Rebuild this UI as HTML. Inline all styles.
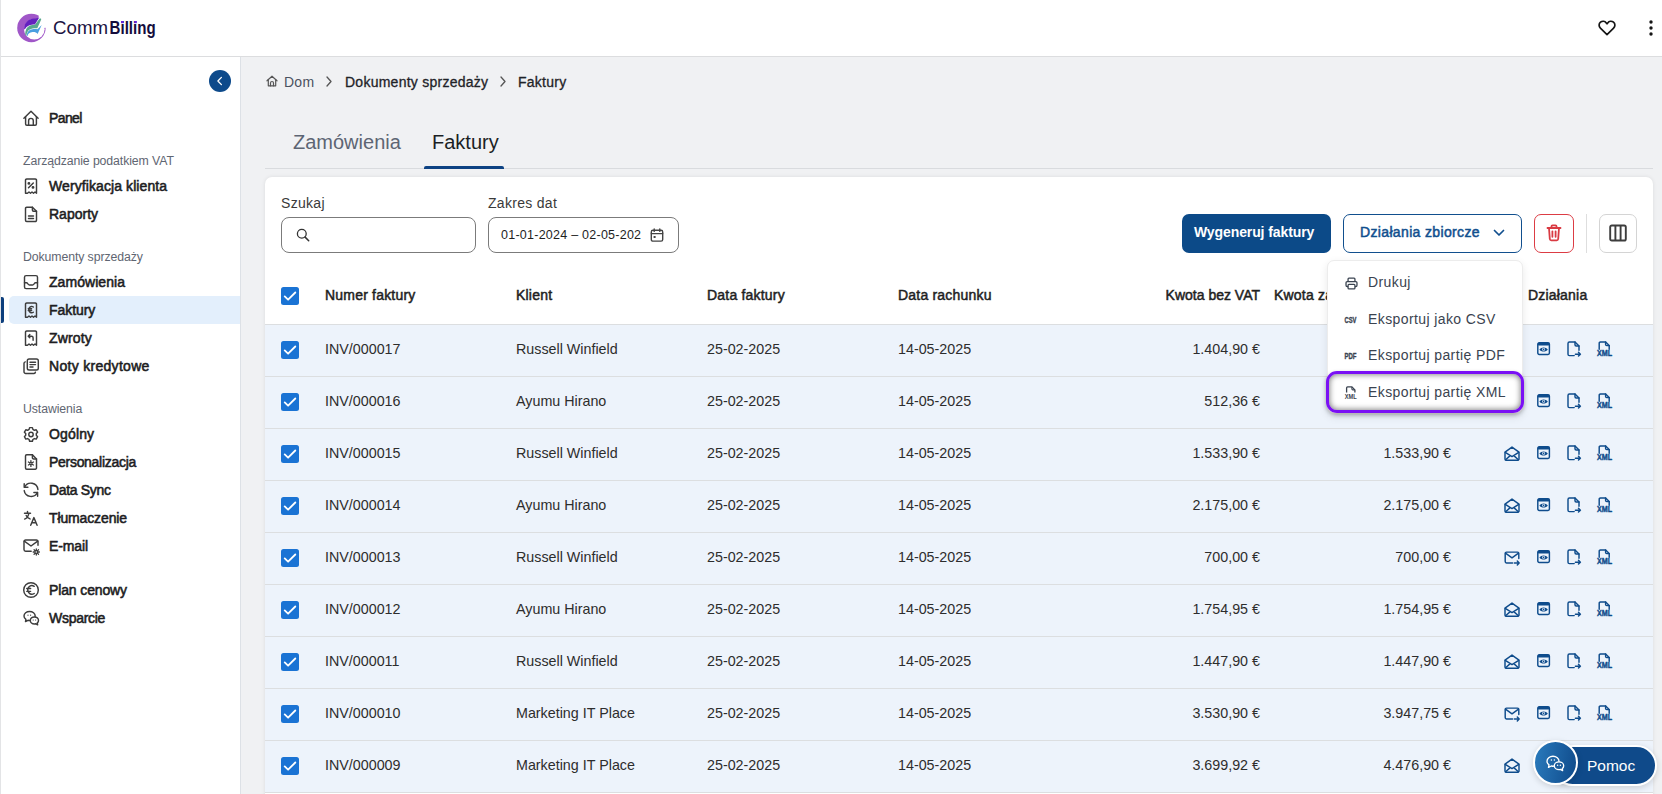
<!DOCTYPE html><html><head><meta charset="utf-8"><title>CommBilling</title><style>
*{box-sizing:border-box;margin:0;padding:0}
html,body{width:1662px;height:794px;overflow:hidden}
body{position:relative;background:#f0f1f3;font-family:"Liberation Sans",sans-serif;color:#1f2328}
.t{position:absolute;white-space:nowrap}
svg{position:absolute;overflow:visible}
#hdr{position:absolute;left:0;top:0;width:1662px;height:57px;background:#fff;border-bottom:1px solid #dcdddf}
#lline{position:absolute;left:0;top:0;width:1px;height:794px;background:#e3e4e6;z-index:50}
#side{position:absolute;left:0;top:57px;width:241px;height:737px;background:#fff;border-right:1px solid #dde1e6}
.nav{position:absolute;left:49px;font-size:14px;color:#1d1d22;-webkit-text-stroke:.55px #1d1d22;white-space:nowrap;letter-spacing:0px}
.grp{position:absolute;left:23px;font-size:12.3px;color:#5f6672;white-space:nowrap;letter-spacing:-0.1px}
.ic{stroke:#3d3d3d;fill:none;stroke-width:1.45;stroke-linecap:round;stroke-linejoin:round}
#card{position:absolute;left:265px;top:177px;width:1388px;height:640px;background:#fff;border-radius:7px;box-shadow:0 0 4px rgba(0,0,0,.09)}
.row{position:absolute;left:265px;width:1388px;height:52px;background:#edf3fb;border-bottom:1px solid #dcdee0}
.cb{position:absolute;left:281px;width:18px;height:18px;background:#1a73d4;border-radius:2.5px}
.cb svg{left:0;top:0}
.cell{position:absolute;font-size:14.3px;color:#2d2d2d;white-space:nowrap}
.hd{position:absolute;font-size:14px;color:#1f1f1f;-webkit-text-stroke:.5px #1f1f1f;white-space:nowrap;letter-spacing:.2px}
.ri{stroke:#0f4c8c;fill:none;stroke-width:1.45;stroke-linecap:round;stroke-linejoin:round}
</style></head><body>
<div id="lline"></div>
<div id="hdr">
<svg style="left:15px;top:12px" width="32" height="32" viewBox="0 0 32 32">
<circle cx="16.4" cy="16" r="14.2" fill="#a057c8"/>
<circle cx="19.3" cy="17.3" r="10.3" fill="#fff"/>
<path d="M19.3 17.3 L25.6 -1 L40 -1 L40 14.6 Z" fill="#fff"/>
<path d="M9.1 17 C9.3 10.5 13.5 7.2 19 6.6 C21 6.4 22.9 6.1 24.4 5.3 L19.9 12.4 C15.5 12.5 11.8 13.4 9.8 17.5 Z" fill="#6421bf"/>
<path d="M10.3 23.2 C10 17.5 12.4 13.6 17.5 13.1 L19.9 12.8 L24.5 6.8 C25.3 6 26.6 6.6 26.1 7.8 L22.3 16.3 C21 16.1 19.5 16.2 17.5 16.4 C14 16.8 12 19.2 11.3 23.6 Z" fill="#5aa98e"/>
<path d="M11.9 24 C11.8 19.8 14 17.5 17.5 17.2 C19.5 17 21.2 17.1 22.5 17.3 L26.7 12.9 L22.6 22 C21.6 20.2 19.7 19.8 17.6 19.9 C14.6 20.2 12.9 21.7 12.4 24.2 Z" fill="#4a9fe0"/>
</svg>
<svg style="left:50px;top:14px" width="110" height="28" viewBox="0 0 110 28"><text x="3" y="19.6" font-family="Liberation Sans" font-size="17.5" fill="#1b1443" textLength="55" lengthAdjust="spacingAndGlyphs">Comm</text><text x="59.6" y="19.6" font-family="Liberation Sans" font-weight="bold" font-size="17.5" fill="#140c3c" textLength="46" lengthAdjust="spacingAndGlyphs">Billing</text><rect x="71" y="7" width="2.6" height="2.2" fill="#6a22d8"/><rect x="84.2" y="7" width="2.6" height="2.2" fill="#6a22d8"/></svg>
<svg style="left:1598px;top:20px" width="18" height="16" viewBox="0 0 18 16"><path d="M9 14.6 L2.4 8.2 C0.6 6.4 0.7 3.6 2.5 2.2 C4.3 0.8 6.9 1.1 8.3 2.9 L9 3.8 L9.7 2.9 C11.1 1.1 13.7 0.8 15.5 2.2 C17.3 3.6 17.4 6.4 15.6 8.2 Z" fill="none" stroke="#151515" stroke-width="1.7" stroke-linejoin="round"/></svg>
<svg style="left:1648px;top:19px" width="6" height="18" viewBox="0 0 6 18"><circle cx="3" cy="3" r="1.7" fill="#151515"/><circle cx="3" cy="9" r="1.7" fill="#151515"/><circle cx="3" cy="15" r="1.7" fill="#151515"/></svg>
</div>
<div id="side"></div>
<svg style="left:209px;top:70px" width="22" height="22" viewBox="0 0 22 22"><circle cx="11" cy="11" r="11" fill="#0d4a8b"/><path d="M12.4 7.4 L8.9 11 L12.4 14.6" fill="none" stroke="#fff" stroke-width="1.3" stroke-linecap="round" stroke-linejoin="round"/></svg>
<div style="position:absolute;left:9px;top:296px;width:231px;height:28px;background:#e3effc;border-radius:5px 0 0 5px"></div>
<div style="position:absolute;left:1px;top:297px;width:3px;height:26px;background:#0d3f7d;border-radius:0 2px 2px 0"></div>
<svg class="ic" style="left:23px;top:110px" width="16" height="16" viewBox="0 0 16 16"><path d="M0.9 8.2 L8 1.2 L15.1 8.2"/><path d="M2.6 6.6 V14 A1.2 1.2 0 0 0 3.8 15.2 H12.2 A1.2 1.2 0 0 0 13.4 14 V6.6"/><path d="M5.6 15.2 V10.7 A2.35 2.35 0 0 1 10.3 10.7 V15.2"/></svg>
<div class="nav" style="top:110px;line-height:16px;letter-spacing:-0.6px">Panel</div>
<svg class="ic" style="left:23px;top:178px" width="16" height="16" viewBox="0 0 16 16"><path d="M2.5 15.2 V2.2 A1.2 1.2 0 0 1 3.7 1 H12.3 A1.2 1.2 0 0 1 13.5 2.2 V15.2 L12 14 L10.5 15.2 L9 14 L7.5 15.2 L6 14 L4.5 15.2 Z" stroke-width="1.45"/><path d="M5.5 9.8 L10.3 5"/><circle cx="5.9" cy="5.4" r=".7" fill="#3d3d3d"/><circle cx="10" cy="9.4" r=".7" fill="#3d3d3d"/></svg>
<div class="nav" style="top:178px;line-height:16px;letter-spacing:0.09px">Weryfikacja klienta</div>
<svg class="ic" style="left:23px;top:206px" width="16" height="16" viewBox="0 0 16 16"><path d="M9.4 1.2 H3.7 A1.2 1.2 0 0 0 2.5 2.4 V14.3 A1.2 1.2 0 0 0 3.7 15.5 H12.3 A1.2 1.2 0 0 0 13.5 14.3 V5.3 Z"/><path d="M9.4 1.2 V4.1 A1.2 1.2 0 0 0 10.6 5.3 H13.5"/><path d="M5.5 10 H10.5 M5.5 12.5 H10.5"/></svg>
<div class="nav" style="top:206px;line-height:16px;letter-spacing:0px">Raporty</div>
<svg class="ic" style="left:23px;top:274px" width="16" height="16" viewBox="0 0 16 16"><rect x="1.5" y="1.6" width="13" height="13" rx="1.6"/><path d="M1.5 8.8 H3.6 C4.6 8.8 5.2 11 6.4 11 H9.6 C10.8 11 11.4 8.8 12.4 8.8 H14.5"/></svg>
<div class="nav" style="top:274px;line-height:16px;letter-spacing:0.05px">Zamówienia</div>
<svg class="ic" style="left:23px;top:302px" width="16" height="16" viewBox="0 0 16 16"><path d="M2.5 15.2 V2.2 A1.2 1.2 0 0 1 3.7 1 H12.3 A1.2 1.2 0 0 1 13.5 2.2 V15.2 L12 14 L10.5 15.2 L9 14 L7.5 15.2 L6 14 L4.5 15.2 Z"/><path d="M10.3 5 A2.8 3.2 0 1 0 10.3 10.2 M5.3 6.8 H8.6 M5.3 8.4 H8.6"/></svg>
<div class="nav" style="top:302px;line-height:16px;letter-spacing:-0.07px">Faktury</div>
<svg class="ic" style="left:23px;top:330px" width="16" height="16" viewBox="0 0 16 16"><path d="M2.5 15.2 V2.2 A1.2 1.2 0 0 1 3.7 1 H12.3 A1.2 1.2 0 0 1 13.5 2.2 V15.2 L12 14 L10.5 15.2 L9 14 L7.5 15.2 L6 14 L4.5 15.2 Z"/><path d="M6.8 4.6 L5.2 6.2 L6.8 7.8 M5.2 6.2 H8.5 A1.6 1.6 0 0 1 10.1 7.8 V10.2"/></svg>
<div class="nav" style="top:330px;line-height:16px;letter-spacing:0.16px">Zwroty</div>
<svg class="ic" style="left:23px;top:358px" width="16" height="16" viewBox="0 0 16 16"><rect x="4.3" y="1" width="11" height="11" rx="1.8"/><path d="M2.3 3.9 A1.5 1.5 0 0 0 1 5.4 V13.7 A1.8 1.8 0 0 0 2.8 15.5 H11 A1.5 1.5 0 0 0 12.4 14.2"/><path d="M7 4.3 H12.5 M7 6.6 H12.5 M7 8.9 H10"/></svg>
<div class="nav" style="top:358px;line-height:16px;letter-spacing:0.3px">Noty kredytowe</div>
<svg class="ic" style="left:23px;top:426px" width="16" height="16" viewBox="0 0 16 16"><path d="M6.6 1.6 H9.4 L9.9 3.4 L11.4 4.3 L13.2 3.8 L14.6 6.2 L13.3 7.6 V9.3 L14.6 10.7 L13.2 13.1 L11.4 12.6 L9.9 13.5 L9.4 15.3 H6.6 L6.1 13.5 L4.6 12.6 L2.8 13.1 L1.4 10.7 L2.7 9.3 V7.6 L1.4 6.2 L2.8 3.8 L4.6 4.3 L6.1 3.4 Z"/><circle cx="8" cy="8.45" r="2.2"/></svg>
<div class="nav" style="top:426px;line-height:16px;letter-spacing:0.14px">Ogólny</div>
<svg class="ic" style="left:23px;top:454px" width="16" height="16" viewBox="0 0 16 16"><path d="M9.4 0.8 H3.7 A1.2 1.2 0 0 0 2.5 2 V14 A1.2 1.2 0 0 0 3.7 15.2 H12.3 A1.2 1.2 0 0 0 13.5 14 V4.9 Z"/><path d="M9.4 0.8 V3.7 A1.2 1.2 0 0 0 10.6 4.9 H13.5"/><path d="M7.9 6.6 V12.4 M5.4 8.05 L10.4 10.95 M5.4 10.95 L10.4 8.05" stroke-width="1.3"/><circle cx="7.9" cy="9.5" r="1.5" fill="#3d3d3d" stroke="none"/><circle cx="7.9" cy="9.5" r=".55" fill="#fff" stroke="none"/></svg>
<div class="nav" style="top:454px;line-height:16px;letter-spacing:-0.29px">Personalizacja</div>
<svg class="ic" style="left:23px;top:482px" width="16" height="16" viewBox="0 0 16 16"><path d="M14.9 7.5 A7 7 0 0 0 1.6 5.2"/><path d="M1.2 1.8 V5.3 H4.9"/><path d="M1.2 8.6 A7 7 0 0 0 14.4 10.5"/><path d="M10.9 10.4 H14.6 V14.2"/></svg>
<div class="nav" style="top:482px;line-height:16px;letter-spacing:-0.33px">Data Sync</div>
<svg class="ic" style="left:23px;top:510px" width="16" height="16" viewBox="0 0 16 16"><path d="M1.5 3.2 H7.5 M4.5 1.5 V3.2 M5.8 3.2 C5.5 6.3 3.8 8.2 1.6 9.1 M3.2 5.5 C3.8 7 5.3 8.3 7 8.9"/><path d="M7.7 15.3 L10.9 7.6 L14.1 15.3 M8.8 12.8 H13"/></svg>
<div class="nav" style="top:510px;line-height:16px;letter-spacing:-0.13px">Tłumaczenie</div>
<svg class="ic" style="left:23px;top:538px" width="16" height="16" viewBox="0 0 16 16"><path d="M15 7.3 V3.6 A1.6 1.6 0 0 0 13.4 2 H2.6 A1.6 1.6 0 0 0 1 3.6 V11.6 A1.6 1.6 0 0 0 2.6 13.2 H8.2"/><path d="M1.3 3.2 L8 8 L14.7 3.2"/><circle cx="13.3" cy="14" r="1.5" stroke-width="1.4"/><path d="M13.3 10.9 V11.7 M13.3 16.3 V17.1 M10.2 14 H11 M15.6 14 H16.4 M11.1 11.8 L11.7 12.4 M14.9 15.6 L15.5 16.2 M15.5 11.8 L14.9 12.4 M11.7 15.6 L11.1 16.2" stroke-width="1.3"/></svg>
<div class="nav" style="top:538px;line-height:16px;letter-spacing:-0.12px">E-mail</div>
<svg class="ic" style="left:23px;top:582px" width="16" height="16" viewBox="0 0 16 16"><circle cx="8" cy="8" r="7.3"/><path d="M11.2 4.3 A4.1 4.3 0 1 0 11.2 11.5"/><path d="M3.7 6.5 H7.7 M3.7 9.3 H7.7" stroke-width="1.3"/></svg>
<div class="nav" style="top:582px;line-height:16px;letter-spacing:-0.13px">Plan cenowy</div>
<svg class="ic" style="left:23px;top:610px" width="16" height="16" viewBox="0 0 16 16"><path d="M6.6 1.4 C3.5 1.4 1 3.4 1 5.9 C1 7.3 1.7 8.5 2.9 9.3 L2.5 11.6 L5 10.3 C5.5 10.4 6 10.5 6.6 10.5 C9.7 10.5 12.2 8.5 12.2 5.9 C12.2 3.4 9.7 1.4 6.6 1.4 Z"/><path d="M11.4 6.9 C9.1 6.9 7.3 8.4 7.3 10.4 C7.3 12.4 9.1 13.9 11.4 13.9 C11.8 13.9 12.2 13.8 12.6 13.7 L14.6 14.8 L14.3 12.9 C15.1 12.3 15.5 11.4 15.5 10.4 C15.5 8.4 13.7 6.9 11.4 6.9 Z" fill="#fff"/><circle cx="5" cy="5.2" r=".6" fill="#3d3d3d" stroke="none"/><circle cx="7.6" cy="5.2" r=".6" fill="#3d3d3d" stroke="none"/><circle cx="10.2" cy="10" r=".6" fill="#3d3d3d" stroke="none"/><circle cx="12.6" cy="10" r=".6" fill="#3d3d3d" stroke="none"/></svg>
<div class="nav" style="top:610px;line-height:16px;letter-spacing:-0.28px">Wsparcie</div>
<div class="grp" style="top:154px;line-height:14px">Zarządzanie podatkiem VAT</div>
<div class="grp" style="top:250px;line-height:14px">Dokumenty sprzedaży</div>
<div class="grp" style="top:402px;line-height:14px">Ustawienia</div>
<svg class="ic" style="left:266px;top:75px;stroke:#555;stroke-width:1.2" width="12" height="12" viewBox="0 0 12 12"><path d="M1 5.8 L6 1.2 L11 5.8"/><path d="M2.3 4.7 V10.8 H9.7 V4.7"/><path d="M4.5 10.8 V8 A1.5 1.5 0 0 1 7.5 8 V10.8"/></svg>
<div class="t" style="left:284px;top:74px;font-size:14px;letter-spacing:.25px;color:#4b5260;line-height:16px">Dom</div>
<svg style="left:325px;top:76px" width="8" height="11" viewBox="0 0 8 11"><path d="M2 1 L6 5.5 L2 10" fill="none" stroke="#555" stroke-width="1.3" stroke-linecap="round" stroke-linejoin="round"/></svg>
<div class="t" style="left:345px;top:74px;font-size:14px;letter-spacing:.25px;color:#1f2328;-webkit-text-stroke:.3px #1f2328;line-height:16px">Dokumenty sprzedaży</div>
<svg style="left:499px;top:76px" width="8" height="11" viewBox="0 0 8 11"><path d="M2 1 L6 5.5 L2 10" fill="none" stroke="#555" stroke-width="1.3" stroke-linecap="round" stroke-linejoin="round"/></svg>
<div class="t" style="left:518px;top:74px;font-size:14px;letter-spacing:.25px;color:#1f2328;-webkit-text-stroke:.3px #1f2328;line-height:16px">Faktury</div>
<div class="t" style="left:293px;top:131px;font-size:20px;color:#5d6573;line-height:22px">Zamówienia</div>
<div class="t" style="left:432px;top:131px;font-size:20px;color:#1b1f24;line-height:22px">Faktury</div>
<div style="position:absolute;left:265px;top:168px;width:1388px;height:1px;background:#d9dbde"></div>
<div style="position:absolute;left:424px;top:166px;width:80px;height:3px;background:#0d4283;border-radius:2px 2px 0 0"></div>
<div id="card"></div>
<div class="t" style="left:281px;top:195px;font-size:14px;letter-spacing:.3px;color:#3a3a3a;line-height:16px">Szukaj</div>
<div style="position:absolute;left:281px;top:217px;width:195px;height:36px;border:1px solid #7b7b7b;border-radius:8px;background:#fff"></div>
<svg style="left:296px;top:228px" width="14" height="14" viewBox="0 0 14 14"><circle cx="5.8" cy="5.8" r="4.4" fill="none" stroke="#333" stroke-width="1.3"/><path d="M9.1 9.1 L12.7 12.7" stroke="#333" stroke-width="1.5" stroke-linecap="round"/></svg>
<div class="t" style="left:488px;top:195px;font-size:14px;letter-spacing:.3px;color:#3a3a3a;line-height:16px">Zakres dat</div>
<div style="position:absolute;left:488px;top:217px;width:191px;height:36px;border:1px solid #7b7b7b;border-radius:8px;background:#fff"></div>
<div class="t" style="left:501px;top:228px;font-size:12.5px;letter-spacing:.25px;color:#1e1e1e;line-height:14px">01-01-2024 – 02-05-202</div>
<svg style="left:650px;top:228px" width="14" height="14" viewBox="0 0 14 14"><rect x="1.3" y="2.3" width="11.4" height="10.8" rx="1.6" fill="none" stroke="#444" stroke-width="1.4"/><path d="M1.3 5.6 H12.7 M4.2 1 V3.4 M9.8 1 V3.4" stroke="#444" stroke-width="1.4" stroke-linecap="round"/><rect x="3.6" y="8" width="2" height="2" fill="#444"/></svg>
<div style="position:absolute;left:1182px;top:214px;width:149px;height:39px;background:#0c4a88;border-radius:7px"></div>
<div class="t" style="left:1194px;top:224px;font-size:14px;font-weight:bold;color:#fff;line-height:16px;letter-spacing:-0.1px">Wygeneruj faktury</div>
<div style="position:absolute;left:1343px;top:214px;width:179px;height:39px;border:1.5px solid #114f8e;border-radius:7px;background:#fff"></div>
<div class="t" style="left:1360px;top:224px;font-size:14px;color:#114f8e;-webkit-text-stroke:.5px #114f8e;line-height:16px;letter-spacing:.35px">Działania zbiorcze</div>
<svg style="left:1493px;top:228px" width="12" height="10" viewBox="0 0 12 10"><path d="M1.5 2.5 L6 7 L10.5 2.5" fill="none" stroke="#114f8e" stroke-width="1.7" stroke-linecap="round" stroke-linejoin="round"/></svg>
<div style="position:absolute;left:1534px;top:214px;width:40px;height:39px;border:1.2px solid #dc3c44;border-radius:7px;background:#fff"></div>
<svg style="left:1546px;top:224px" width="16" height="18" viewBox="0 0 16 18"><path d="M1.5 4 H14.5 M5.5 4 V2.3 A1 1 0 0 1 6.5 1.3 H9.5 A1 1 0 0 1 10.5 2.3 V4 M3 4 L3.8 15 A1.5 1.5 0 0 0 5.3 16.3 H10.7 A1.5 1.5 0 0 0 12.2 15 L13 4 M6.4 7.3 V12.8 M9.6 7.3 V12.8" fill="none" stroke="#d93a42" stroke-width="1.8" stroke-linecap="round" stroke-linejoin="round"/></svg>
<div style="position:absolute;left:1586px;top:214px;width:1px;height:39px;background:#dedede"></div>
<div style="position:absolute;left:1599px;top:214px;width:38px;height:39px;border:1px solid #d4d4d4;border-radius:7px;background:#fff"></div>
<svg style="left:1609px;top:224px" width="18" height="18" viewBox="0 0 18 18"><rect x="1.2" y="1.5" width="15.6" height="15" rx="1.6" fill="none" stroke="#3d3d3d" stroke-width="1.9"/><path d="M6.4 1.5 V16.5 M11.6 1.5 V16.5" stroke="#3d3d3d" stroke-width="1.9"/></svg>
<div style="position:absolute;left:265px;top:324px;width:1388px;height:1px;background:#dcdee0"></div>
<div class="cb" style="top:287px"><svg width="18" height="18" viewBox="0 0 18 18"><path d="M3.7 9.4 L7.1 12.7 L14.3 5.5" fill="none" stroke="#fff" stroke-width="1.8" stroke-linecap="round" stroke-linejoin="round"/></svg></div>
<div class="hd" style="left:325px;top:287px;line-height:16px">Numer faktury</div>
<div class="hd" style="left:516px;top:287px;line-height:16px">Klient</div>
<div class="hd" style="left:707px;top:287px;line-height:16px">Data faktury</div>
<div class="hd" style="left:898px;top:287px;line-height:16px">Data rachunku</div>
<div class="hd" style="left:1274px;top:287px;line-height:16px">Kwota za</div>
<div class="hd" style="left:1528px;top:287px;line-height:16px">Działania</div>
<div class="hd" style="left:1160px;top:287px;width:100px;text-align:right;line-height:16px;letter-spacing:0">Kwota bez VAT</div>
<div class="row" style="top:325px"></div>
<div class="cb" style="top:341px"><svg width="18" height="18" viewBox="0 0 18 18"><path d="M3.7 9.4 L7.1 12.7 L14.3 5.5" fill="none" stroke="#fff" stroke-width="1.8" stroke-linecap="round" stroke-linejoin="round"/></svg></div>
<div class="cell" style="left:325px;top:341px;line-height:16px">INV/000017</div>
<div class="cell" style="left:516px;top:341px;line-height:16px">Russell Winfield</div>
<div class="cell" style="left:707px;top:341px;line-height:16px">25-02-2025</div>
<div class="cell" style="left:898px;top:341px;line-height:16px">14-05-2025</div>
<div class="cell" style="left:1140px;top:341px;width:120px;text-align:right;line-height:16px">1.404,90 €</div>
<div class="cell" style="left:1331px;top:341px;width:120px;text-align:right;line-height:16px">1.404,90 €</div>
<svg class="ri" style="left:1504px;top:342px" width="16" height="16" viewBox="0 0 16 16"><path d="M1 6.2 L8 1.1 L15 6.2 V13 A1.2 1.2 0 0 1 13.8 14.2 H2.2 A1.2 1.2 0 0 1 1 13 Z"/><path d="M1.3 6.4 L8 10.6 L14.7 6.4 M1.6 13.7 L6.2 9.6 M14.4 13.7 L9.8 9.6"/></svg>
<svg class="ri" style="left:1537px;top:342px" width="13" height="13" viewBox="0 0 13 13"><rect x="0.8" y="0.8" width="11.6" height="11.6" rx="1.4"/><rect x="0.8" y="0.8" width="11.6" height="2.6" rx="1" fill="#0f4c8c" stroke="none"/><path d="M2.4 7.4 C4.2 4.7 9 4.7 10.8 7.4 C9 10.1 4.2 10.1 2.4 7.4 Z" fill="#0f4c8c" stroke="none"/><circle cx="6.6" cy="7.4" r="1.45" fill="#edf3fb" stroke="none"/><circle cx="6.6" cy="7.4" r=".8" fill="#0f4c8c" stroke="none"/></svg>
<svg class="ri" style="left:1567px;top:341px" width="15" height="16" viewBox="0 0 15 16"><path d="M7.2 14.6 H2.4 A1.4 1.4 0 0 1 1 13.2 V2.4 A1.4 1.4 0 0 1 2.4 1 H8 L12 5 V9.2"/><path d="M8 1 V3.8 A1.2 1.2 0 0 0 9.2 5 H12"/><path d="M8.4 13.2 H13.4 M11.5 11.3 L13.4 13.2 L11.5 15.1"/></svg>
<svg class="ri" style="left:1597px;top:341px" width="15" height="16" viewBox="0 0 15 16"><path d="M2.2 8.2 V2.2 A1.2 1.2 0 0 1 3.4 1 H8.6 L12.2 4.6 V8.2"/><path d="M8.6 1 V3.5 A1.1 1.1 0 0 0 9.7 4.6 H12.2"/><text x="0" y="15.2" font-family="Liberation Sans" font-weight="bold" font-size="8.8" fill="#0f4c8c" stroke="#0f4c8c" stroke-width=".45" textLength="15" lengthAdjust="spacingAndGlyphs">XML</text></svg>
<div class="row" style="top:377px"></div>
<div class="cb" style="top:393px"><svg width="18" height="18" viewBox="0 0 18 18"><path d="M3.7 9.4 L7.1 12.7 L14.3 5.5" fill="none" stroke="#fff" stroke-width="1.8" stroke-linecap="round" stroke-linejoin="round"/></svg></div>
<div class="cell" style="left:325px;top:393px;line-height:16px">INV/000016</div>
<div class="cell" style="left:516px;top:393px;line-height:16px">Ayumu Hirano</div>
<div class="cell" style="left:707px;top:393px;line-height:16px">25-02-2025</div>
<div class="cell" style="left:898px;top:393px;line-height:16px">14-05-2025</div>
<div class="cell" style="left:1140px;top:393px;width:120px;text-align:right;line-height:16px">512,36 €</div>
<div class="cell" style="left:1331px;top:393px;width:120px;text-align:right;line-height:16px">512,36 €</div>
<svg class="ri" style="left:1504px;top:394px" width="16" height="16" viewBox="0 0 16 16"><path d="M1 6.2 L8 1.1 L15 6.2 V13 A1.2 1.2 0 0 1 13.8 14.2 H2.2 A1.2 1.2 0 0 1 1 13 Z"/><path d="M1.3 6.4 L8 10.6 L14.7 6.4 M1.6 13.7 L6.2 9.6 M14.4 13.7 L9.8 9.6"/></svg>
<svg class="ri" style="left:1537px;top:394px" width="13" height="13" viewBox="0 0 13 13"><rect x="0.8" y="0.8" width="11.6" height="11.6" rx="1.4"/><rect x="0.8" y="0.8" width="11.6" height="2.6" rx="1" fill="#0f4c8c" stroke="none"/><path d="M2.4 7.4 C4.2 4.7 9 4.7 10.8 7.4 C9 10.1 4.2 10.1 2.4 7.4 Z" fill="#0f4c8c" stroke="none"/><circle cx="6.6" cy="7.4" r="1.45" fill="#edf3fb" stroke="none"/><circle cx="6.6" cy="7.4" r=".8" fill="#0f4c8c" stroke="none"/></svg>
<svg class="ri" style="left:1567px;top:393px" width="15" height="16" viewBox="0 0 15 16"><path d="M7.2 14.6 H2.4 A1.4 1.4 0 0 1 1 13.2 V2.4 A1.4 1.4 0 0 1 2.4 1 H8 L12 5 V9.2"/><path d="M8 1 V3.8 A1.2 1.2 0 0 0 9.2 5 H12"/><path d="M8.4 13.2 H13.4 M11.5 11.3 L13.4 13.2 L11.5 15.1"/></svg>
<svg class="ri" style="left:1597px;top:393px" width="15" height="16" viewBox="0 0 15 16"><path d="M2.2 8.2 V2.2 A1.2 1.2 0 0 1 3.4 1 H8.6 L12.2 4.6 V8.2"/><path d="M8.6 1 V3.5 A1.1 1.1 0 0 0 9.7 4.6 H12.2"/><text x="0" y="15.2" font-family="Liberation Sans" font-weight="bold" font-size="8.8" fill="#0f4c8c" stroke="#0f4c8c" stroke-width=".45" textLength="15" lengthAdjust="spacingAndGlyphs">XML</text></svg>
<div class="row" style="top:429px"></div>
<div class="cb" style="top:445px"><svg width="18" height="18" viewBox="0 0 18 18"><path d="M3.7 9.4 L7.1 12.7 L14.3 5.5" fill="none" stroke="#fff" stroke-width="1.8" stroke-linecap="round" stroke-linejoin="round"/></svg></div>
<div class="cell" style="left:325px;top:445px;line-height:16px">INV/000015</div>
<div class="cell" style="left:516px;top:445px;line-height:16px">Russell Winfield</div>
<div class="cell" style="left:707px;top:445px;line-height:16px">25-02-2025</div>
<div class="cell" style="left:898px;top:445px;line-height:16px">14-05-2025</div>
<div class="cell" style="left:1140px;top:445px;width:120px;text-align:right;line-height:16px">1.533,90 €</div>
<div class="cell" style="left:1331px;top:445px;width:120px;text-align:right;line-height:16px">1.533,90 €</div>
<svg class="ri" style="left:1504px;top:446px" width="16" height="16" viewBox="0 0 16 16"><path d="M1 6.2 L8 1.1 L15 6.2 V13 A1.2 1.2 0 0 1 13.8 14.2 H2.2 A1.2 1.2 0 0 1 1 13 Z"/><path d="M1.3 6.4 L8 10.6 L14.7 6.4 M1.6 13.7 L6.2 9.6 M14.4 13.7 L9.8 9.6"/></svg>
<svg class="ri" style="left:1537px;top:446px" width="13" height="13" viewBox="0 0 13 13"><rect x="0.8" y="0.8" width="11.6" height="11.6" rx="1.4"/><rect x="0.8" y="0.8" width="11.6" height="2.6" rx="1" fill="#0f4c8c" stroke="none"/><path d="M2.4 7.4 C4.2 4.7 9 4.7 10.8 7.4 C9 10.1 4.2 10.1 2.4 7.4 Z" fill="#0f4c8c" stroke="none"/><circle cx="6.6" cy="7.4" r="1.45" fill="#edf3fb" stroke="none"/><circle cx="6.6" cy="7.4" r=".8" fill="#0f4c8c" stroke="none"/></svg>
<svg class="ri" style="left:1567px;top:445px" width="15" height="16" viewBox="0 0 15 16"><path d="M7.2 14.6 H2.4 A1.4 1.4 0 0 1 1 13.2 V2.4 A1.4 1.4 0 0 1 2.4 1 H8 L12 5 V9.2"/><path d="M8 1 V3.8 A1.2 1.2 0 0 0 9.2 5 H12"/><path d="M8.4 13.2 H13.4 M11.5 11.3 L13.4 13.2 L11.5 15.1"/></svg>
<svg class="ri" style="left:1597px;top:445px" width="15" height="16" viewBox="0 0 15 16"><path d="M2.2 8.2 V2.2 A1.2 1.2 0 0 1 3.4 1 H8.6 L12.2 4.6 V8.2"/><path d="M8.6 1 V3.5 A1.1 1.1 0 0 0 9.7 4.6 H12.2"/><text x="0" y="15.2" font-family="Liberation Sans" font-weight="bold" font-size="8.8" fill="#0f4c8c" stroke="#0f4c8c" stroke-width=".45" textLength="15" lengthAdjust="spacingAndGlyphs">XML</text></svg>
<div class="row" style="top:481px"></div>
<div class="cb" style="top:497px"><svg width="18" height="18" viewBox="0 0 18 18"><path d="M3.7 9.4 L7.1 12.7 L14.3 5.5" fill="none" stroke="#fff" stroke-width="1.8" stroke-linecap="round" stroke-linejoin="round"/></svg></div>
<div class="cell" style="left:325px;top:497px;line-height:16px">INV/000014</div>
<div class="cell" style="left:516px;top:497px;line-height:16px">Ayumu Hirano</div>
<div class="cell" style="left:707px;top:497px;line-height:16px">25-02-2025</div>
<div class="cell" style="left:898px;top:497px;line-height:16px">14-05-2025</div>
<div class="cell" style="left:1140px;top:497px;width:120px;text-align:right;line-height:16px">2.175,00 €</div>
<div class="cell" style="left:1331px;top:497px;width:120px;text-align:right;line-height:16px">2.175,00 €</div>
<svg class="ri" style="left:1504px;top:498px" width="16" height="16" viewBox="0 0 16 16"><path d="M1 6.2 L8 1.1 L15 6.2 V13 A1.2 1.2 0 0 1 13.8 14.2 H2.2 A1.2 1.2 0 0 1 1 13 Z"/><path d="M1.3 6.4 L8 10.6 L14.7 6.4 M1.6 13.7 L6.2 9.6 M14.4 13.7 L9.8 9.6"/></svg>
<svg class="ri" style="left:1537px;top:498px" width="13" height="13" viewBox="0 0 13 13"><rect x="0.8" y="0.8" width="11.6" height="11.6" rx="1.4"/><rect x="0.8" y="0.8" width="11.6" height="2.6" rx="1" fill="#0f4c8c" stroke="none"/><path d="M2.4 7.4 C4.2 4.7 9 4.7 10.8 7.4 C9 10.1 4.2 10.1 2.4 7.4 Z" fill="#0f4c8c" stroke="none"/><circle cx="6.6" cy="7.4" r="1.45" fill="#edf3fb" stroke="none"/><circle cx="6.6" cy="7.4" r=".8" fill="#0f4c8c" stroke="none"/></svg>
<svg class="ri" style="left:1567px;top:497px" width="15" height="16" viewBox="0 0 15 16"><path d="M7.2 14.6 H2.4 A1.4 1.4 0 0 1 1 13.2 V2.4 A1.4 1.4 0 0 1 2.4 1 H8 L12 5 V9.2"/><path d="M8 1 V3.8 A1.2 1.2 0 0 0 9.2 5 H12"/><path d="M8.4 13.2 H13.4 M11.5 11.3 L13.4 13.2 L11.5 15.1"/></svg>
<svg class="ri" style="left:1597px;top:497px" width="15" height="16" viewBox="0 0 15 16"><path d="M2.2 8.2 V2.2 A1.2 1.2 0 0 1 3.4 1 H8.6 L12.2 4.6 V8.2"/><path d="M8.6 1 V3.5 A1.1 1.1 0 0 0 9.7 4.6 H12.2"/><text x="0" y="15.2" font-family="Liberation Sans" font-weight="bold" font-size="8.8" fill="#0f4c8c" stroke="#0f4c8c" stroke-width=".45" textLength="15" lengthAdjust="spacingAndGlyphs">XML</text></svg>
<div class="row" style="top:533px"></div>
<div class="cb" style="top:549px"><svg width="18" height="18" viewBox="0 0 18 18"><path d="M3.7 9.4 L7.1 12.7 L14.3 5.5" fill="none" stroke="#fff" stroke-width="1.8" stroke-linecap="round" stroke-linejoin="round"/></svg></div>
<div class="cell" style="left:325px;top:549px;line-height:16px">INV/000013</div>
<div class="cell" style="left:516px;top:549px;line-height:16px">Russell Winfield</div>
<div class="cell" style="left:707px;top:549px;line-height:16px">25-02-2025</div>
<div class="cell" style="left:898px;top:549px;line-height:16px">14-05-2025</div>
<div class="cell" style="left:1140px;top:549px;width:120px;text-align:right;line-height:16px">700,00 €</div>
<div class="cell" style="left:1331px;top:549px;width:120px;text-align:right;line-height:16px">700,00 €</div>
<svg class="ri" style="left:1504px;top:550px" width="16" height="16" viewBox="0 0 16 16"><path d="M14.8 8.6 V3.4 A1.3 1.3 0 0 0 13.5 2.1 H2.5 A1.3 1.3 0 0 0 1.2 3.4 V11.6 A1.3 1.3 0 0 0 2.5 12.9 H8.6"/><path d="M1.5 3.2 L8 7.8 L14.5 3.2"/><path d="M10.4 13 H15.2 M13.3 11.1 L15.2 13 L13.3 14.9"/></svg>
<svg class="ri" style="left:1537px;top:550px" width="13" height="13" viewBox="0 0 13 13"><rect x="0.8" y="0.8" width="11.6" height="11.6" rx="1.4"/><rect x="0.8" y="0.8" width="11.6" height="2.6" rx="1" fill="#0f4c8c" stroke="none"/><path d="M2.4 7.4 C4.2 4.7 9 4.7 10.8 7.4 C9 10.1 4.2 10.1 2.4 7.4 Z" fill="#0f4c8c" stroke="none"/><circle cx="6.6" cy="7.4" r="1.45" fill="#edf3fb" stroke="none"/><circle cx="6.6" cy="7.4" r=".8" fill="#0f4c8c" stroke="none"/></svg>
<svg class="ri" style="left:1567px;top:549px" width="15" height="16" viewBox="0 0 15 16"><path d="M7.2 14.6 H2.4 A1.4 1.4 0 0 1 1 13.2 V2.4 A1.4 1.4 0 0 1 2.4 1 H8 L12 5 V9.2"/><path d="M8 1 V3.8 A1.2 1.2 0 0 0 9.2 5 H12"/><path d="M8.4 13.2 H13.4 M11.5 11.3 L13.4 13.2 L11.5 15.1"/></svg>
<svg class="ri" style="left:1597px;top:549px" width="15" height="16" viewBox="0 0 15 16"><path d="M2.2 8.2 V2.2 A1.2 1.2 0 0 1 3.4 1 H8.6 L12.2 4.6 V8.2"/><path d="M8.6 1 V3.5 A1.1 1.1 0 0 0 9.7 4.6 H12.2"/><text x="0" y="15.2" font-family="Liberation Sans" font-weight="bold" font-size="8.8" fill="#0f4c8c" stroke="#0f4c8c" stroke-width=".45" textLength="15" lengthAdjust="spacingAndGlyphs">XML</text></svg>
<div class="row" style="top:585px"></div>
<div class="cb" style="top:601px"><svg width="18" height="18" viewBox="0 0 18 18"><path d="M3.7 9.4 L7.1 12.7 L14.3 5.5" fill="none" stroke="#fff" stroke-width="1.8" stroke-linecap="round" stroke-linejoin="round"/></svg></div>
<div class="cell" style="left:325px;top:601px;line-height:16px">INV/000012</div>
<div class="cell" style="left:516px;top:601px;line-height:16px">Ayumu Hirano</div>
<div class="cell" style="left:707px;top:601px;line-height:16px">25-02-2025</div>
<div class="cell" style="left:898px;top:601px;line-height:16px">14-05-2025</div>
<div class="cell" style="left:1140px;top:601px;width:120px;text-align:right;line-height:16px">1.754,95 €</div>
<div class="cell" style="left:1331px;top:601px;width:120px;text-align:right;line-height:16px">1.754,95 €</div>
<svg class="ri" style="left:1504px;top:602px" width="16" height="16" viewBox="0 0 16 16"><path d="M1 6.2 L8 1.1 L15 6.2 V13 A1.2 1.2 0 0 1 13.8 14.2 H2.2 A1.2 1.2 0 0 1 1 13 Z"/><path d="M1.3 6.4 L8 10.6 L14.7 6.4 M1.6 13.7 L6.2 9.6 M14.4 13.7 L9.8 9.6"/></svg>
<svg class="ri" style="left:1537px;top:602px" width="13" height="13" viewBox="0 0 13 13"><rect x="0.8" y="0.8" width="11.6" height="11.6" rx="1.4"/><rect x="0.8" y="0.8" width="11.6" height="2.6" rx="1" fill="#0f4c8c" stroke="none"/><path d="M2.4 7.4 C4.2 4.7 9 4.7 10.8 7.4 C9 10.1 4.2 10.1 2.4 7.4 Z" fill="#0f4c8c" stroke="none"/><circle cx="6.6" cy="7.4" r="1.45" fill="#edf3fb" stroke="none"/><circle cx="6.6" cy="7.4" r=".8" fill="#0f4c8c" stroke="none"/></svg>
<svg class="ri" style="left:1567px;top:601px" width="15" height="16" viewBox="0 0 15 16"><path d="M7.2 14.6 H2.4 A1.4 1.4 0 0 1 1 13.2 V2.4 A1.4 1.4 0 0 1 2.4 1 H8 L12 5 V9.2"/><path d="M8 1 V3.8 A1.2 1.2 0 0 0 9.2 5 H12"/><path d="M8.4 13.2 H13.4 M11.5 11.3 L13.4 13.2 L11.5 15.1"/></svg>
<svg class="ri" style="left:1597px;top:601px" width="15" height="16" viewBox="0 0 15 16"><path d="M2.2 8.2 V2.2 A1.2 1.2 0 0 1 3.4 1 H8.6 L12.2 4.6 V8.2"/><path d="M8.6 1 V3.5 A1.1 1.1 0 0 0 9.7 4.6 H12.2"/><text x="0" y="15.2" font-family="Liberation Sans" font-weight="bold" font-size="8.8" fill="#0f4c8c" stroke="#0f4c8c" stroke-width=".45" textLength="15" lengthAdjust="spacingAndGlyphs">XML</text></svg>
<div class="row" style="top:637px"></div>
<div class="cb" style="top:653px"><svg width="18" height="18" viewBox="0 0 18 18"><path d="M3.7 9.4 L7.1 12.7 L14.3 5.5" fill="none" stroke="#fff" stroke-width="1.8" stroke-linecap="round" stroke-linejoin="round"/></svg></div>
<div class="cell" style="left:325px;top:653px;line-height:16px">INV/000011</div>
<div class="cell" style="left:516px;top:653px;line-height:16px">Russell Winfield</div>
<div class="cell" style="left:707px;top:653px;line-height:16px">25-02-2025</div>
<div class="cell" style="left:898px;top:653px;line-height:16px">14-05-2025</div>
<div class="cell" style="left:1140px;top:653px;width:120px;text-align:right;line-height:16px">1.447,90 €</div>
<div class="cell" style="left:1331px;top:653px;width:120px;text-align:right;line-height:16px">1.447,90 €</div>
<svg class="ri" style="left:1504px;top:654px" width="16" height="16" viewBox="0 0 16 16"><path d="M1 6.2 L8 1.1 L15 6.2 V13 A1.2 1.2 0 0 1 13.8 14.2 H2.2 A1.2 1.2 0 0 1 1 13 Z"/><path d="M1.3 6.4 L8 10.6 L14.7 6.4 M1.6 13.7 L6.2 9.6 M14.4 13.7 L9.8 9.6"/></svg>
<svg class="ri" style="left:1537px;top:654px" width="13" height="13" viewBox="0 0 13 13"><rect x="0.8" y="0.8" width="11.6" height="11.6" rx="1.4"/><rect x="0.8" y="0.8" width="11.6" height="2.6" rx="1" fill="#0f4c8c" stroke="none"/><path d="M2.4 7.4 C4.2 4.7 9 4.7 10.8 7.4 C9 10.1 4.2 10.1 2.4 7.4 Z" fill="#0f4c8c" stroke="none"/><circle cx="6.6" cy="7.4" r="1.45" fill="#edf3fb" stroke="none"/><circle cx="6.6" cy="7.4" r=".8" fill="#0f4c8c" stroke="none"/></svg>
<svg class="ri" style="left:1567px;top:653px" width="15" height="16" viewBox="0 0 15 16"><path d="M7.2 14.6 H2.4 A1.4 1.4 0 0 1 1 13.2 V2.4 A1.4 1.4 0 0 1 2.4 1 H8 L12 5 V9.2"/><path d="M8 1 V3.8 A1.2 1.2 0 0 0 9.2 5 H12"/><path d="M8.4 13.2 H13.4 M11.5 11.3 L13.4 13.2 L11.5 15.1"/></svg>
<svg class="ri" style="left:1597px;top:653px" width="15" height="16" viewBox="0 0 15 16"><path d="M2.2 8.2 V2.2 A1.2 1.2 0 0 1 3.4 1 H8.6 L12.2 4.6 V8.2"/><path d="M8.6 1 V3.5 A1.1 1.1 0 0 0 9.7 4.6 H12.2"/><text x="0" y="15.2" font-family="Liberation Sans" font-weight="bold" font-size="8.8" fill="#0f4c8c" stroke="#0f4c8c" stroke-width=".45" textLength="15" lengthAdjust="spacingAndGlyphs">XML</text></svg>
<div class="row" style="top:689px"></div>
<div class="cb" style="top:705px"><svg width="18" height="18" viewBox="0 0 18 18"><path d="M3.7 9.4 L7.1 12.7 L14.3 5.5" fill="none" stroke="#fff" stroke-width="1.8" stroke-linecap="round" stroke-linejoin="round"/></svg></div>
<div class="cell" style="left:325px;top:705px;line-height:16px">INV/000010</div>
<div class="cell" style="left:516px;top:705px;line-height:16px">Marketing IT Place</div>
<div class="cell" style="left:707px;top:705px;line-height:16px">25-02-2025</div>
<div class="cell" style="left:898px;top:705px;line-height:16px">14-05-2025</div>
<div class="cell" style="left:1140px;top:705px;width:120px;text-align:right;line-height:16px">3.530,90 €</div>
<div class="cell" style="left:1331px;top:705px;width:120px;text-align:right;line-height:16px">3.947,75 €</div>
<svg class="ri" style="left:1504px;top:706px" width="16" height="16" viewBox="0 0 16 16"><path d="M14.8 8.6 V3.4 A1.3 1.3 0 0 0 13.5 2.1 H2.5 A1.3 1.3 0 0 0 1.2 3.4 V11.6 A1.3 1.3 0 0 0 2.5 12.9 H8.6"/><path d="M1.5 3.2 L8 7.8 L14.5 3.2"/><path d="M10.4 13 H15.2 M13.3 11.1 L15.2 13 L13.3 14.9"/></svg>
<svg class="ri" style="left:1537px;top:706px" width="13" height="13" viewBox="0 0 13 13"><rect x="0.8" y="0.8" width="11.6" height="11.6" rx="1.4"/><rect x="0.8" y="0.8" width="11.6" height="2.6" rx="1" fill="#0f4c8c" stroke="none"/><path d="M2.4 7.4 C4.2 4.7 9 4.7 10.8 7.4 C9 10.1 4.2 10.1 2.4 7.4 Z" fill="#0f4c8c" stroke="none"/><circle cx="6.6" cy="7.4" r="1.45" fill="#edf3fb" stroke="none"/><circle cx="6.6" cy="7.4" r=".8" fill="#0f4c8c" stroke="none"/></svg>
<svg class="ri" style="left:1567px;top:705px" width="15" height="16" viewBox="0 0 15 16"><path d="M7.2 14.6 H2.4 A1.4 1.4 0 0 1 1 13.2 V2.4 A1.4 1.4 0 0 1 2.4 1 H8 L12 5 V9.2"/><path d="M8 1 V3.8 A1.2 1.2 0 0 0 9.2 5 H12"/><path d="M8.4 13.2 H13.4 M11.5 11.3 L13.4 13.2 L11.5 15.1"/></svg>
<svg class="ri" style="left:1597px;top:705px" width="15" height="16" viewBox="0 0 15 16"><path d="M2.2 8.2 V2.2 A1.2 1.2 0 0 1 3.4 1 H8.6 L12.2 4.6 V8.2"/><path d="M8.6 1 V3.5 A1.1 1.1 0 0 0 9.7 4.6 H12.2"/><text x="0" y="15.2" font-family="Liberation Sans" font-weight="bold" font-size="8.8" fill="#0f4c8c" stroke="#0f4c8c" stroke-width=".45" textLength="15" lengthAdjust="spacingAndGlyphs">XML</text></svg>
<div class="row" style="top:741px"></div>
<div class="cb" style="top:757px"><svg width="18" height="18" viewBox="0 0 18 18"><path d="M3.7 9.4 L7.1 12.7 L14.3 5.5" fill="none" stroke="#fff" stroke-width="1.8" stroke-linecap="round" stroke-linejoin="round"/></svg></div>
<div class="cell" style="left:325px;top:757px;line-height:16px">INV/000009</div>
<div class="cell" style="left:516px;top:757px;line-height:16px">Marketing IT Place</div>
<div class="cell" style="left:707px;top:757px;line-height:16px">25-02-2025</div>
<div class="cell" style="left:898px;top:757px;line-height:16px">14-05-2025</div>
<div class="cell" style="left:1140px;top:757px;width:120px;text-align:right;line-height:16px">3.699,92 €</div>
<div class="cell" style="left:1331px;top:757px;width:120px;text-align:right;line-height:16px">4.476,90 €</div>
<svg class="ri" style="left:1504px;top:758px" width="16" height="16" viewBox="0 0 16 16"><path d="M1 6.2 L8 1.1 L15 6.2 V13 A1.2 1.2 0 0 1 13.8 14.2 H2.2 A1.2 1.2 0 0 1 1 13 Z"/><path d="M1.3 6.4 L8 10.6 L14.7 6.4 M1.6 13.7 L6.2 9.6 M14.4 13.7 L9.8 9.6"/></svg>
<svg class="ri" style="left:1537px;top:758px" width="13" height="13" viewBox="0 0 13 13"><rect x="0.8" y="0.8" width="11.6" height="11.6" rx="1.4"/><rect x="0.8" y="0.8" width="11.6" height="2.6" rx="1" fill="#0f4c8c" stroke="none"/><path d="M2.4 7.4 C4.2 4.7 9 4.7 10.8 7.4 C9 10.1 4.2 10.1 2.4 7.4 Z" fill="#0f4c8c" stroke="none"/><circle cx="6.6" cy="7.4" r="1.45" fill="#edf3fb" stroke="none"/><circle cx="6.6" cy="7.4" r=".8" fill="#0f4c8c" stroke="none"/></svg>
<svg class="ri" style="left:1567px;top:757px" width="15" height="16" viewBox="0 0 15 16"><path d="M7.2 14.6 H2.4 A1.4 1.4 0 0 1 1 13.2 V2.4 A1.4 1.4 0 0 1 2.4 1 H8 L12 5 V9.2"/><path d="M8 1 V3.8 A1.2 1.2 0 0 0 9.2 5 H12"/><path d="M8.4 13.2 H13.4 M11.5 11.3 L13.4 13.2 L11.5 15.1"/></svg>
<svg class="ri" style="left:1597px;top:757px" width="15" height="16" viewBox="0 0 15 16"><path d="M2.2 8.2 V2.2 A1.2 1.2 0 0 1 3.4 1 H8.6 L12.2 4.6 V8.2"/><path d="M8.6 1 V3.5 A1.1 1.1 0 0 0 9.7 4.6 H12.2"/><text x="0" y="15.2" font-family="Liberation Sans" font-weight="bold" font-size="8.8" fill="#0f4c8c" stroke="#0f4c8c" stroke-width=".45" textLength="15" lengthAdjust="spacingAndGlyphs">XML</text></svg>
<div style="position:absolute;left:1327px;top:260px;width:196px;height:154px;background:#fff;border:1px solid #ececec;border-radius:7px;box-shadow:0 3px 8px rgba(0,0,0,.09)"></div>
<div class="t" style="left:1368px;top:274px;font-size:14px;letter-spacing:.4px;color:#3a4350;line-height:16px">Drukuj</div>
<div class="t" style="left:1368px;top:311px;font-size:14px;letter-spacing:.4px;color:#3a4350;line-height:16px">Eksportuj jako CSV</div>
<div class="t" style="left:1368px;top:347px;font-size:14px;letter-spacing:.4px;color:#3a4350;line-height:16px">Eksportuj partię PDF</div>
<div class="t" style="left:1368px;top:384px;font-size:14px;letter-spacing:.4px;color:#3a4350;line-height:16px">Eksportuj partię XML</div>
<svg style="left:1344.5px;top:276.5px" width="13" height="13" viewBox="0 0 14 14" fill="none" stroke="#3a4350" stroke-width="1.4" stroke-linejoin="round"><path d="M3.3 5 V2.2 A1 1 0 0 1 4.3 1.2 H9.7 A1 1 0 0 1 10.7 2.2 V5"/><path d="M3.3 10.3 H2.4 A1.3 1.3 0 0 1 1.1 9 V6.3 A1.3 1.3 0 0 1 2.4 5 H11.6 A1.3 1.3 0 0 1 12.9 6.3 V9 A1.3 1.3 0 0 1 11.6 10.3 H10.7"/><rect x="3.3" y="8" width="7.4" height="4.8" rx="1"/></svg>
<svg style="left:1344px;top:316px" width="13" height="8" viewBox="0 0 13 8"><text x="0.5" y="7.2" font-family="Liberation Sans" font-weight="bold" font-size="8.2" fill="#3a4350" stroke="#3a4350" stroke-width=".35" textLength="12" lengthAdjust="spacingAndGlyphs">CSV</text></svg>
<svg style="left:1344px;top:352px" width="13" height="8" viewBox="0 0 13 8"><text x="0.5" y="7.2" font-family="Liberation Sans" font-weight="bold" font-size="8.2" fill="#3a4350" stroke="#3a4350" stroke-width=".35" textLength="12" lengthAdjust="spacingAndGlyphs">PDF</text></svg>
<div style="position:absolute;left:1326px;top:371px;width:198px;height:42px;border:3px solid #7a10f4;border-radius:11px;box-shadow:inset 0 0 6px rgba(0,0,0,.6), 0 2px 4px rgba(0,0,0,.3)"></div>
<svg style="left:1344px;top:386px" width="14" height="14" viewBox="0 0 14 14"><path d="M2.6 6.6 V1.9 A1 1 0 0 1 3.6 0.9 H7.9 L10.9 3.9 V6.6" fill="none" stroke="#3a4350" stroke-width="1.3"/><path d="M7.9 0.9 V3 A.9 .9 0 0 0 8.8 3.9 H10.9" fill="none" stroke="#3a4350" stroke-width="1.1"/><text x="0.8" y="13" font-family="Liberation Sans" font-weight="bold" font-size="6.6" fill="#3a4350" textLength="12" lengthAdjust="spacingAndGlyphs">XML</text></svg>
<div style="position:absolute;left:1552px;top:745px;width:105px;height:41px;background:#0f4a8a;border:2px solid #fff;border-radius:21px;box-shadow:0 2px 6px rgba(0,0,0,.15)"></div>
<div class="t" style="left:1587px;top:757px;font-size:15.5px;color:#fff;line-height:18px">Pomoc</div>
<div style="position:absolute;left:1533px;top:740px;width:45px;height:45px;background:linear-gradient(100deg,#2a7bbd,#0f4a8a);border:2px solid #fff;border-radius:50%;box-shadow:0 2px 6px rgba(0,0,0,.15)"></div>
<svg style="left:1546px;top:754.5px" width="20" height="18" viewBox="0 0 20 18" fill="none" stroke="#fff" stroke-width="1.35" stroke-linejoin="round"><path d="M7 1.2 C3.6 1.2 1 3.4 1 6.2 C1 7.7 1.8 9 3 9.9 L2.5 12.4 L5.3 11 C5.9 11.1 6.4 11.2 7 11.2 C10.4 11.2 13 9 13 6.2 C13 3.4 10.4 1.2 7 1.2 Z"/><path d="M13 6.8 C10.4 6.8 8.3 8.5 8.3 10.7 C8.3 12.9 10.4 14.6 13 14.6 C13.5 14.6 14 14.5 14.4 14.4 L16.6 15.6 L16.3 13.6 C17.2 12.9 17.7 11.9 17.7 10.7 C17.7 8.5 15.6 6.8 13 6.8 Z" fill="#1d5d9c"/><circle cx="5.4" cy="5.1" r=".75" fill="#fff" stroke="none"/><circle cx="8.4" cy="5.1" r=".75" fill="#fff" stroke="none"/><circle cx="11.6" cy="10.3" r=".75" fill="#fff" stroke="none"/><circle cx="14.4" cy="10.3" r=".75" fill="#fff" stroke="none"/></svg>
</body></html>
